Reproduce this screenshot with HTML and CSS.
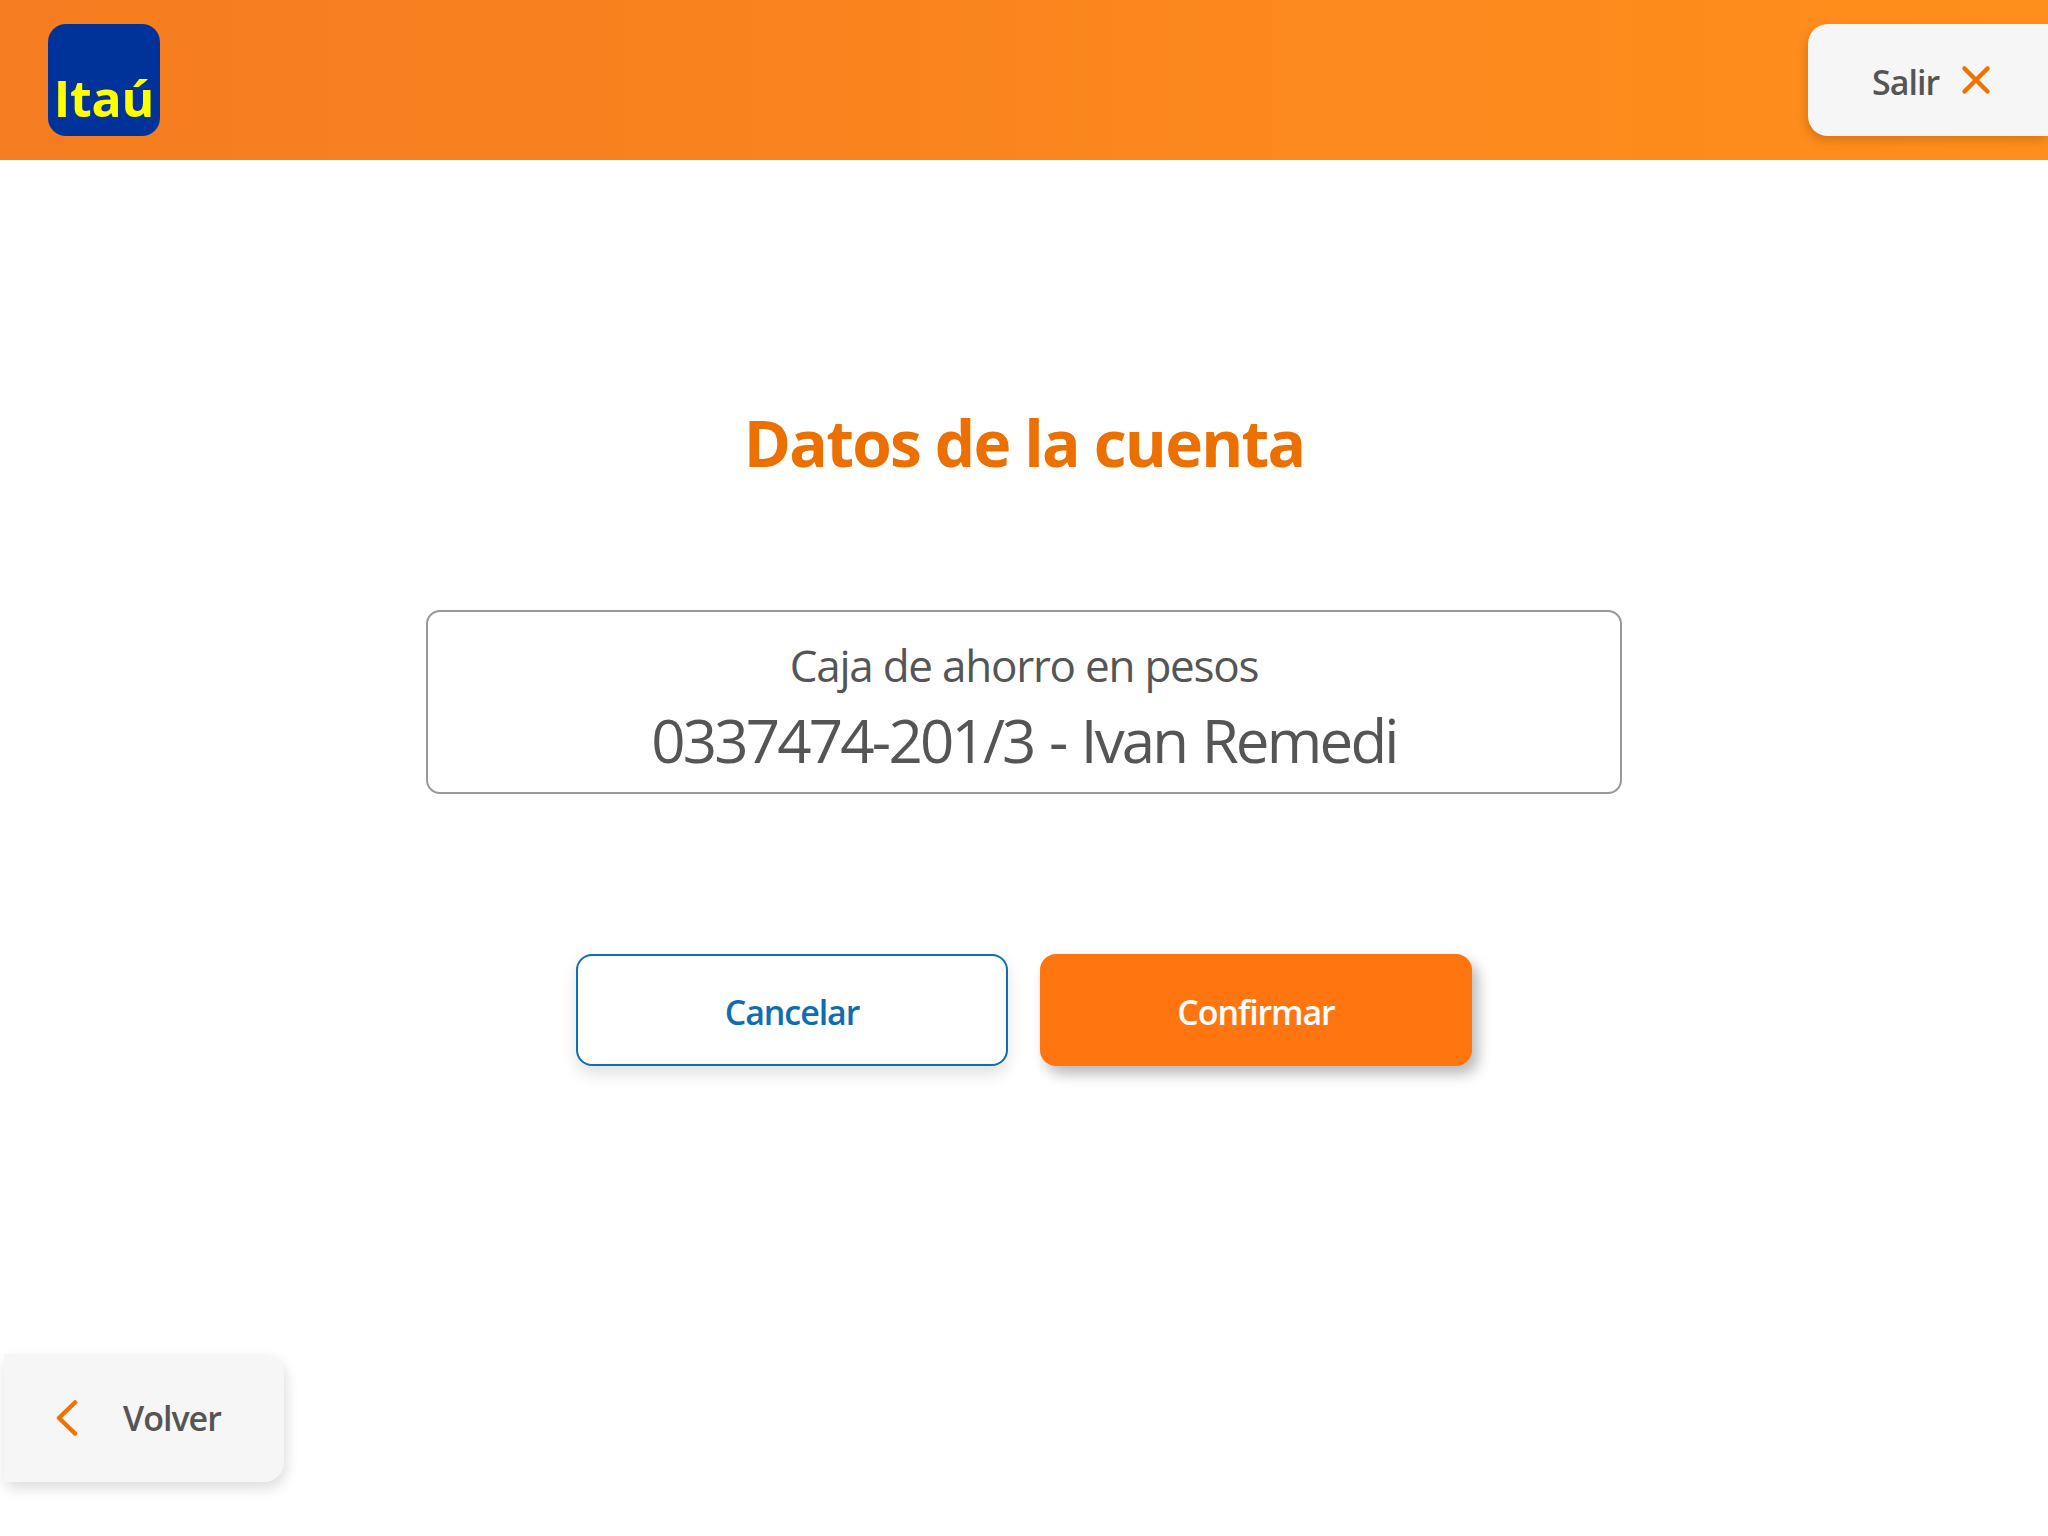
FILE: index.html
```html
<!DOCTYPE html>
<html lang="es">
<head>
    <meta charset="UTF-8">
    <meta name="viewport" content="width=device-width, initial-scale=1.0">
    <title>Datos de la cuenta</title>
    <link rel="stylesheet" href="styles.css">
</head>
<body>
    <header class="top-bar">
        <div class="logo"><span class="logo-text">Itaú</span></div>
        <button class="exit-button" type="button">
            <span>Salir</span>
            <svg class="exit-icon" viewBox="0 0 32 32" width="32" height="32" aria-hidden="true">
                <path d="M4.5 4.5 L27.5 27.5 M27.5 4.5 L4.5 27.5"></path>
            </svg>
        </button>
    </header>

    <main class="content">
        <h1 class="title">Datos de la cuenta</h1>
        <div class="account-box">
            <div class="account-type">Caja de ahorro en pesos</div>
            <div class="account-number">0337474-201/3 - Ivan Remedi</div>
        </div>
        <div class="actions">
            <button class="btn btn-cancel" type="button">Cancelar</button>
            <button class="btn btn-confirm" type="button">Confirmar</button>
        </div>
    </main>

    <footer class="bottom-bar">
        <button class="back-button" type="button">
            <svg class="back-icon" viewBox="0 0 22 36" width="22" height="36" aria-hidden="true">
                <path d="M19 2.5 L3 18 L19 33.5"></path>
            </svg>
            <span>Volver</span>
        </button>
    </footer>
</body>
</html>
```

FILE: styles.css
```css
* {
    box-sizing: border-box;
}

html, body {
    margin: 0;
    padding: 0;
}

body {
    width: 2048px;
    height: 1536px;
    overflow: hidden;
    display: flex;
    flex-direction: column;
    background-color: #fff;
    font-family: "Open Sans", "Noto Sans", sans-serif;
    color: #555;
}

button {
    font-family: inherit;
    border: 0;
    cursor: pointer;
}

.top-bar {
    height: 160px;
    flex: none;
    display: flex;
    align-items: center;
    justify-content: space-between;
    padding-left: 48px;
    background: linear-gradient(90deg, #f57c20 0%, #ff8f1c 100%);
}

.logo {
    width: 112px;
    height: 112px;
    display: flex;
    align-items: flex-end;
    justify-content: center;
    padding-bottom: 13px;
    background-color: #003399;
    border-radius: 18px;
}

.logo-text {
    font-size: 50px;
    line-height: 50px;
    font-weight: 700;
    letter-spacing: -0.2px;
    color: #ff0;
}

.exit-button {
    width: 240px;
    height: 112px;
    display: flex;
    align-items: center;
    gap: 21px;
    padding: 4px 0 0 64px;
    background-color: #f6f6f6;
    border-radius: 20px 0 0 20px;
    box-shadow: -2px 5px 10px rgba(150, 70, 0, 0.3);
    font-size: 34px;
    font-weight: 600;
    letter-spacing: -1px;
    color: #555;
}

.exit-icon {
    margin-top: -4px;
}

.exit-icon path,
.back-icon path {
    fill: none;
    stroke: #ef7300;
    stroke-width: 4.5;
    stroke-linecap: round;
    stroke-linejoin: round;
}

.content {
    flex: 1;
    display: flex;
    flex-direction: column;
    align-items: center;
}

.title {
    margin: 241px 0 0 0;
    font-size: 64px;
    line-height: 84px;
    font-weight: 700;
    letter-spacing: -1.8px;
    color: #ec7000;
}

.account-box {
    width: 1196px;
    height: 184px;
    margin-top: 125px;
    padding-top: 23px;
    border: 2px solid #999;
    border-radius: 14px;
    text-align: center;
}

.account-type {
    font-size: 44px;
    line-height: 60px;
    letter-spacing: -1.25px;
}

.account-number {
    margin-top: 7px;
    font-size: 60px;
    line-height: 76px;
    letter-spacing: -2.8px;
    word-spacing: 2.5px;
}

.actions {
    display: flex;
    gap: 32px;
    margin-top: 160px;
}

.btn {
    width: 432px;
    height: 112px;
    padding-top: 4px;
    border-radius: 16px;
    font-size: 34px;
    font-weight: 600;
    letter-spacing: -1.1px;
}

.btn-cancel {
    background-color: #fff;
    border: 2px solid #106eb0;
    color: #106eb0;
    box-shadow: 0 8px 16px rgba(0, 0, 0, 0.12);
}

.btn-confirm {
    background-color: #ff7611;
    color: #fff;
    box-shadow: 6px 8px 14px rgba(0, 0, 0, 0.28);
}

.bottom-bar {
    flex: none;
    height: 182px;
    padding-left: 4px;
}

.back-button {
    width: 280px;
    height: 128px;
    display: flex;
    align-items: center;
    gap: 45px;
    padding-left: 52px;
    background-color: #f6f6f6;
    border-radius: 0 20px 20px 0;
    box-shadow: 2px 6px 14px rgba(0, 0, 0, 0.14);
    font-size: 34px;
    font-weight: 600;
    letter-spacing: -1px;
    color: #555;
}
```
